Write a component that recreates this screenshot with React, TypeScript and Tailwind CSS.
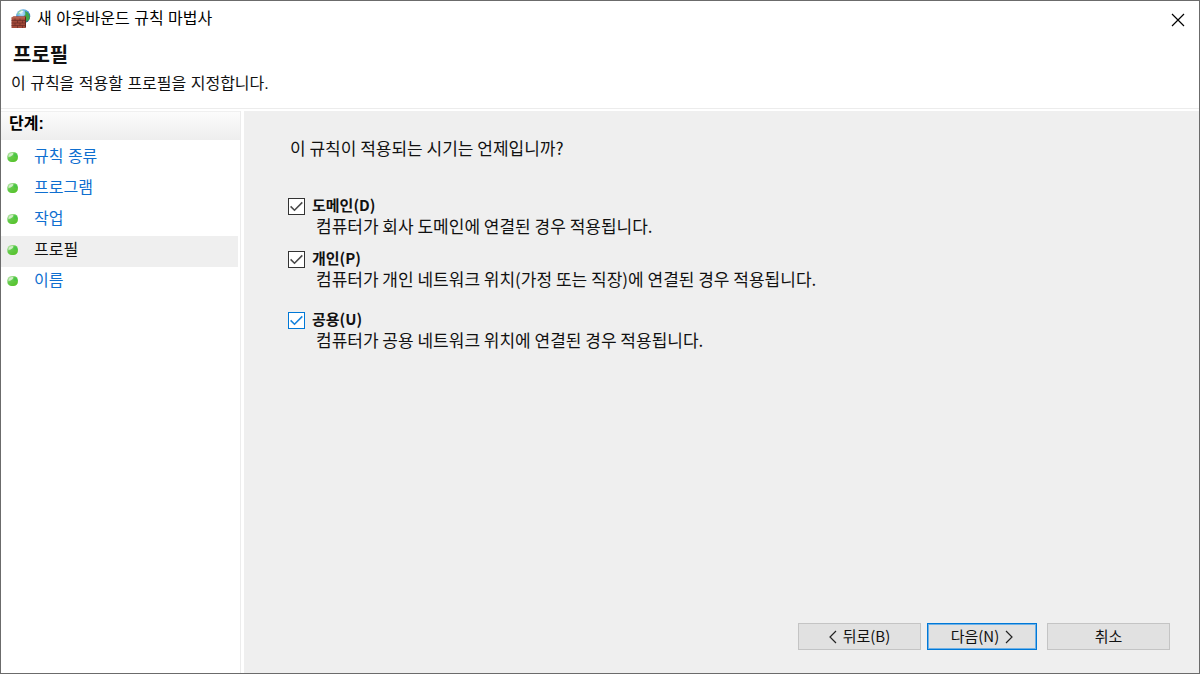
import { useState } from 'react';

const steps = ['규칙 종류', '프로그램', '작업', '프로필', '이름'];

function FirewallIcon() {
  return (
    <svg width="20" height="20" viewBox="0 0 20 20" aria-hidden="true">
      <defs>
        <radialGradient id="globe" cx="0.4" cy="0.3" r="0.8">
          <stop offset="0" stopColor="#c4e9fb" />
          <stop offset="0.5" stopColor="#4a9bdc" />
          <stop offset="1" stopColor="#174c91" />
        </radialGradient>
      </defs>
      <circle cx="12.2" cy="7.3" r="7" fill="url(#globe)" />
      <path d="M14 2l3 1.6 1.8 3.6-.6 3.5-2.6 2-.8-3-1.8-2.4 1.5-2Z" fill="#3fa648" />
      <path d="M6.5 4 9 1.4l3-.7-1 2.4-3 2-1.5 1Z" fill="#8fd2a0" />
      <path d="M8 3.4l3-1.8 1.6 1-3 2.2Z" fill="#e6f6f4" />
      <path d="M0.5 8.5 2.5 7.3h12.5V18l-1 1H0.5Z" fill="#a34a3a" />
      <path d="M14 8.5 15 7.3V18l-1 1Z" fill="#62251d" />
      <path d="M0.5 11.5H14M0.5 14H14M0.5 16.5H14M4 9v2.5M9 9v2.5M6.5 11.5V14M11.5 11.5V14M4 14v2.5M9 14v2.5M6.5 16.5V19M11.5 16.5V19" stroke="#6a2d25" strokeWidth="0.7" fill="none" />
      <path d="M0.5 8.9H14" stroke="#cb7b65" strokeWidth="0.8" />
    </svg>
  );
}

function StepDot() {
  return (
    <svg width="12" height="12" viewBox="0 0 12 12" aria-hidden="true">
      <defs>
        <linearGradient id="dot" x1="0" y1="0" x2="0.7" y2="1">
          <stop offset="0" stopColor="#d5efcc" />
          <stop offset="0.5" stopColor="#64cb4b" />
          <stop offset="1" stopColor="#58c22b" />
        </linearGradient>
      </defs>
      <rect x="0.3" y="0.9" width="10.6" height="10.2" rx="4.3" fill="url(#dot)" />
      <path d="M1.4 6C1.6 3 3.2 2 6.2 2 6.5 4 4.6 5.5 1.4 6Z" fill="#e3f4dd" opacity="0.8" />
      <path d="M6.8 2c3 .2 3.6 2 3.5 4L6.8 5.5Z" fill="#42c449" opacity="0.7" />
    </svg>
  );
}

interface OptionProps {
  id: string;
  label: string;
  description: string;
  active?: boolean;
}

function ProfileOption({ id, label, description, active = false }: OptionProps) {
  const [checked, setChecked] = useState(true);
  return (
    <div className="grid grid-cols-[24px_1fr]">
      <span className="relative mt-1 size-[17px]">
        <input
          id={id}
          type="checkbox"
          checked={checked}
          onChange={(e) => setChecked(e.target.checked)}
          aria-describedby={`${id}-description`}
          className={`peer block size-[17px] appearance-none border bg-white outline-none ${active ? 'border-[#0078d7]' : 'border-[#333333]'}`}
        />
        <svg
          viewBox="0 0 17 17"
          aria-hidden="true"
          className={`pointer-events-none absolute inset-0 hidden size-[17px] peer-checked:block ${active ? 'text-[#1683dc]' : 'text-[#4a4a4a]'}`}
        >
          <path d="m2.6 8.4 3.9 3.8 7.8-7.8" fill="none" stroke="currentColor" strokeWidth="1.6" />
        </svg>
      </span>
      <label htmlFor={id} className="text-[15px] leading-[22px] font-bold">{label}</label>
      <p id={`${id}-description`} className="col-start-2 pl-1 text-[17px] leading-5">{description}</p>
    </div>
  );
}

export default function App() {
  return (
    <div className="flex min-h-screen flex-col border border-[#6b6b6b] bg-white font-['Noto_Sans_CJK_KR',sans-serif] text-[#111111]">
      <header className="border-b border-[#ececec] font-['Liberation_Sans','Noto_Sans_CJK_KR',sans-serif]">
        <div className="flex h-9 items-center justify-between pl-[10px]">
          <div className="flex items-center gap-[6px]">
            <FirewallIcon />
            <span className="text-base text-black">새 아웃바운드 규칙 마법사</span>
          </div>
          <button type="button" aria-label="닫기" className="flex h-9 w-[42px] items-center justify-center pt-[2px]">
            <svg width="14" height="14" viewBox="0 0 14 14" aria-hidden="true">
              <path d="m1 1 12 12M13 1 1 13" stroke="#000" strokeWidth="1.2" />
            </svg>
          </button>
        </div>
        <h1 className="px-3 pt-1 text-xl leading-7 font-bold">프로필</h1>
        <p className="px-[10px] pt-[3px] pb-3 text-base leading-6">이 규칙을 적용할 프로필을 지정합니다.</p>
      </header>

      <div className="flex flex-1 pt-[2px]">
        <nav aria-label="단계" className="w-60 shrink-0 border-r border-[#ececec] font-['Liberation_Sans','Noto_Sans_CJK_KR',sans-serif]">
          <h2 className="h-[29px] border-t border-[#f0f0f0] bg-linear-to-b from-[#fcfcfc] to-[#eeeeee] pl-2 text-base leading-6 font-bold text-black">단계:</h2>
          <ul className="flex flex-col pt-[3px]">
            {steps.map((step) => (
              <li key={step}>
                <a
                  href="#"
                  aria-current={step === '프로필' ? 'step' : undefined}
                  className={`mr-[2px] flex h-[31px] items-center gap-[15px] pb-1 pl-[6px] text-base ${step === '프로필' ? 'bg-[#efefef] text-[#111111]' : 'text-[#0f6fd0]'}`}
                >
                  <StepDot />
                  {step}
                </a>
              </li>
            ))}
          </ul>
        </nav>

        <main className="ml-[3px] flex flex-1 flex-col bg-[#efefef]">
          <div className="flex-1 pt-[25px] pl-11">
            <p className="pl-[2px] text-[17px] leading-6">이 규칙이 적용되는 시기는 언제입니까?</p>
            <div className="flex flex-col gap-[11px] pt-[34px]">
              <ProfileOption id="domain" label="도메인(D)" description="컴퓨터가 회사 도메인에 연결된 경우 적용됩니다." />
              <ProfileOption id="private" label="개인(P)" description="컴퓨터가 개인 네트워크 위치(가정 또는 직장)에 연결된 경우 적용됩니다." />
              <div className="pt-2">
                <ProfileOption id="public" label="공용(U)" description="컴퓨터가 공용 네트워크 위치에 연결된 경우 적용됩니다." active />
              </div>
            </div>
          </div>
          <footer className="flex justify-end pr-[29px] pb-[23px] text-[15px]">
            <button type="button" className="mr-[6px] flex h-[27px] w-[123px] items-center justify-center gap-[6px] border border-[#c4c4c4] bg-[#e1e1e1]">
              <svg width="8" height="14" viewBox="0 0 8 14" aria-hidden="true">
                <path d="M7 1 1 7l6 6" fill="none" stroke="#222" strokeWidth="1.2" />
              </svg>
              뒤로(B)
            </button>
            <button type="button" className="mr-[10px] flex h-[27px] w-[110px] items-center justify-center gap-[6px] border border-[#0078d7] bg-[#e1e1e1] ring-1 ring-[#6fb1e6] ring-inset">
              다음(N)
              <svg width="8" height="14" viewBox="0 0 8 14" aria-hidden="true">
                <path d="m1 1 6 6-6 6" fill="none" stroke="#222" strokeWidth="1.2" />
              </svg>
            </button>
            <button type="button" className="h-[27px] w-[123px] border border-[#c4c4c4] bg-[#e1e1e1]">취소</button>
          </footer>
        </main>
      </div>
    </div>
  );
}
